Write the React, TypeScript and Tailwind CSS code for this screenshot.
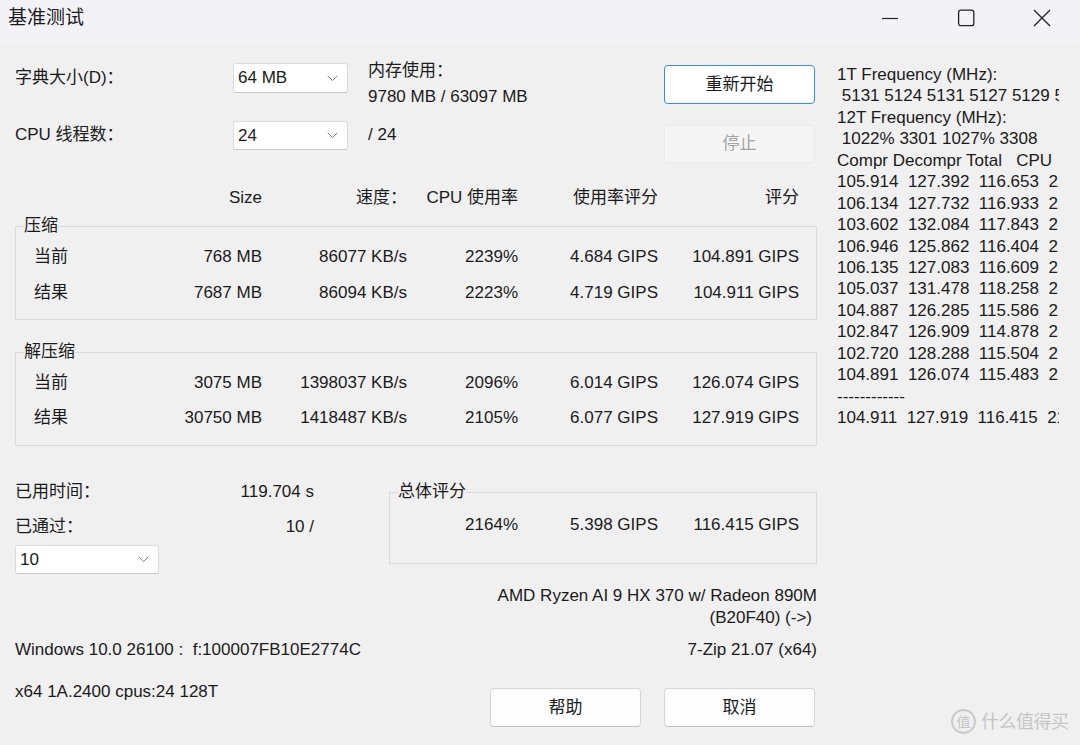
import React from "react";

function Chevron() {
  return (
    <svg width="11" height="7" viewBox="0 0 11 7" className="shrink-0">
      <path d="M0.8 0.8 L5.5 5.6 L10.2 0.8" fill="none" stroke="#7a7a7a" strokeWidth="1" />
    </svg>
  );
}

function Select({ value, className }: { value: string; className: string }) {
  return (
    <div
      className={
        "flex items-center justify-between bg-white border border-[#dcdcdc] border-b-[#c8c8c8] rounded-[3px] pl-[4px] pr-[9px] " +
        className
      }
    >
      <span>{value}</span>
      <Chevron />
    </div>
  );
}

function Btn({ label, className }: { label: string; className: string }) {
  return (
    <div className={"flex items-center justify-center rounded-[4px] " + className}>{label}</div>
  );
}

const rows1 = [
  ["当前", "768 MB", "86077 KB/s", "2239%", "4.684 GIPS", "104.891 GIPS"],
  ["结果", "7687 MB", "86094 KB/s", "2223%", "4.719 GIPS", "104.911 GIPS"],
];
const rows2 = [
  ["当前", "3075 MB", "1398037 KB/s", "2096%", "6.014 GIPS", "126.074 GIPS"],
  ["结果", "30750 MB", "1418487 KB/s", "2105%", "6.077 GIPS", "127.919 GIPS"],
];

function DataRow({ r }: { r: string[] }) {
  return (
    <div className="grid grid-cols-[118px_128px_145px_111px_140px_141px]">
      <div className="pl-[18px]">{r[0]}</div>
      <div className="text-right">{r[1]}</div>
      <div className="text-right">{r[2]}</div>
      <div className="text-right">{r[3]}</div>
      <div className="text-right">{r[4]}</div>
      <div className="text-right">{r[5]}</div>
    </div>
  );
}

const rightLines = [
  "1T Frequency (MHz):",
  " 5131 5124 5131 5127 5129 5130 5128",
  "12T Frequency (MHz):",
  " 1022% 3301 1027% 3308",
  "Compr Decompr Total   CPU",
  "105.914  127.392  116.653  2239%",
  "106.134  127.732  116.933  2231%",
  "103.602  132.084  117.843  2198%",
  "106.946  125.862  116.404  2175%",
  "106.135  127.083  116.609  2164%",
  "105.037  131.478  118.258  2170%",
  "104.887  126.285  115.586  2158%",
  "102.847  126.909  114.878  2161%",
  "102.720  128.288  115.504  2166%",
  "104.891  126.074  115.483  2164%",
  "------------",
  "104.911  127.919  116.415  2164%",
];

export default function App() {
  return (
    <div className="relative w-[1080px] h-[745px] overflow-hidden bg-[#f0f0f0] text-[#1b1b1b] text-[17px] leading-[20px] font-['Liberation_Sans','Noto_Sans_CJK_SC',sans-serif]">
      {/* Title bar */}
      <div className="h-[43px] bg-[#f3f2f7] flex items-start">
        <div className="pl-[8px] pt-[8px] text-[19px] leading-[20px] text-[#1a1a1a]">基准测试</div>
        <div className="ml-auto flex">
          <div className="w-[76px] h-[36px] flex items-center justify-center">
            <svg width="18" height="18" viewBox="0 0 18 18">
              <path d="M1 9.5 H17" stroke="#222" strokeWidth="1.2" />
            </svg>
          </div>
          <div className="w-[76px] h-[36px] flex items-center justify-center">
            <svg width="18" height="18" viewBox="0 0 18 18">
              <rect x="1.6" y="1.1" width="15.2" height="15.6" rx="2.2" fill="none" stroke="#222" strokeWidth="1.3" />
            </svg>
          </div>
          <div className="w-[76px] h-[36px] flex items-center justify-center">
            <svg width="18" height="18" viewBox="0 0 18 18">
              <path d="M1 1 L17 17 M17 1 L1 17" stroke="#222" strokeWidth="1.3" />
            </svg>
          </div>
        </div>
      </div>

      {/* Main */}
      <div className="flex pl-[15px] pt-[12px]">
        {/* Left column */}
        <div className="w-[802px] flex flex-col">
          {/* Row 1 */}
          <div className="flex h-[49px]">
            <div className="w-[218px] mt-[13px]">字典大小(D)：</div>
            <Select value="64 MB" className="w-[115px] h-[30px] mt-[8px]" />
            <div className="ml-[20px] w-[296px] mt-[3px] leading-[26px]">
              <div>内存使用：</div>
              <div>9780 MB / 63097 MB</div>
            </div>
            <Btn
              label="重新开始"
              className="w-[151px] h-[39px] mt-[10px] bg-white border-[1.5px] border-[#3a8ddb]"
            />
          </div>
          {/* Row 2 */}
          <div className="flex h-[59px]">
            <div className="w-[218px] mt-[21px]">CPU 线程数：</div>
            <Select value="24" className="w-[115px] h-[29px] mt-[17px]" />
            <div className="ml-[20px] w-[296px] mt-[21px]">/ 24</div>
            <Btn
              label="停止"
              className="w-[151px] h-[38px] mt-[21px] bg-[#f5f5f5] border border-[#ebebeb] text-[#a3a3a3]"
            />
          </div>

          {/* Header */}
          <div className="mt-[25px] grid grid-cols-[119px_128px_145px_111px_140px_141px]">
            <div></div>
            <div className="text-right">Size</div>
            <div className="text-right">速度：</div>
            <div className="text-right">CPU 使用率</div>
            <div className="text-right">使用率评分</div>
            <div className="text-right">评分</div>
          </div>

          {/* Compression */}
          <fieldset className="mt-[8px] border border-[#dadada] px-0 pt-[11px] pb-[16px] flex flex-col gap-[16px]">
            <legend className="ml-[8px] leading-[20px]">压缩</legend>
            {rows1.map((r, i) => (
              <DataRow key={i} r={r} />
            ))}
          </fieldset>

          {/* Decompression */}
          <fieldset className="mt-[22px] border border-[#dadada] px-0 pt-[11px] pb-[17px] flex flex-col gap-[15px]">
            <legend className="ml-[8px] leading-[20px]">解压缩</legend>
            {rows2.map((r, i) => (
              <DataRow key={i} r={r} />
            ))}
          </fieldset>

          {/* Bottom */}
          <div className="mt-[36px] flex">
            <div className="w-[299px] flex flex-col">
              <div className="flex justify-between">
                <span>已用时间：</span>
                <span>119.704 s</span>
              </div>
              <div className="flex justify-between mt-[15px]">
                <span>已通过：</span>
                <span>10 /</span>
              </div>
              <Select value="10" className="w-[144px] h-[29px] mt-[8px]" />
            </div>
            <fieldset className="ml-[75px] w-[428px] h-[82px] border border-[#dadada] px-0 pt-[13px]">
              <legend className="ml-[8px] leading-[20px]">总体评分</legend>
              <div className="grid grid-cols-[128px_140px_141px]">
                <div className="text-right">2164%</div>
                <div className="text-right">5.398 GIPS</div>
                <div className="text-right">116.415 GIPS</div>
              </div>
            </fieldset>
          </div>

          {/* CPU name */}
          <div className="mt-[11px] text-right leading-[22px]">
            <div>AMD Ryzen AI 9 HX 370 w/ Radeon 890M</div>
            <div className="pr-[5px]">(B20F40) (-&gt;)</div>
          </div>

          {/* Windows line */}
          <div className="mt-[11px] flex justify-between">
            <span className="whitespace-pre">Windows 10.0 26100 :  f:100007FB10E2774C</span>
            <span>7-Zip 21.07 (x64)</span>
          </div>

          {/* Last row */}
          <div className="mt-[22px] flex items-start">
            <span>x64 1A.2400 cpus:24 128T</span>
            <div className="ml-auto mr-[2px] mt-[6px] flex gap-[23px]">
              <Btn label="帮助" className="w-[151px] h-[39px] bg-[#fdfdfd] border border-[#d6d6d6] border-b-[#c4c4c4]" />
              <Btn label="取消" className="w-[151px] h-[39px] bg-[#fdfdfd] border border-[#d6d6d6] border-b-[#c4c4c4]" />
            </div>
          </div>
        </div>

        {/* Right panel */}
        <div className="ml-[20px] mt-[9px] w-[222px] overflow-hidden leading-[21.44px] whitespace-pre">
          {rightLines.map((l, i) => (
            <div key={i}>{l}</div>
          ))}
        </div>
      </div>

      {/* Watermark */}
      <div className="absolute left-[951px] top-[709px] flex items-center gap-[5px] text-[#c6c6c6]">
        <div className="w-[25px] h-[25px] rounded-full border-[2px] border-[#cacaca] flex items-center justify-center text-[14px] leading-none">
          值
        </div>
        <span className="text-[18px] leading-[24px] tracking-[-0.5px]">什么值得买</span>
      </div>
    </div>
  );
}
